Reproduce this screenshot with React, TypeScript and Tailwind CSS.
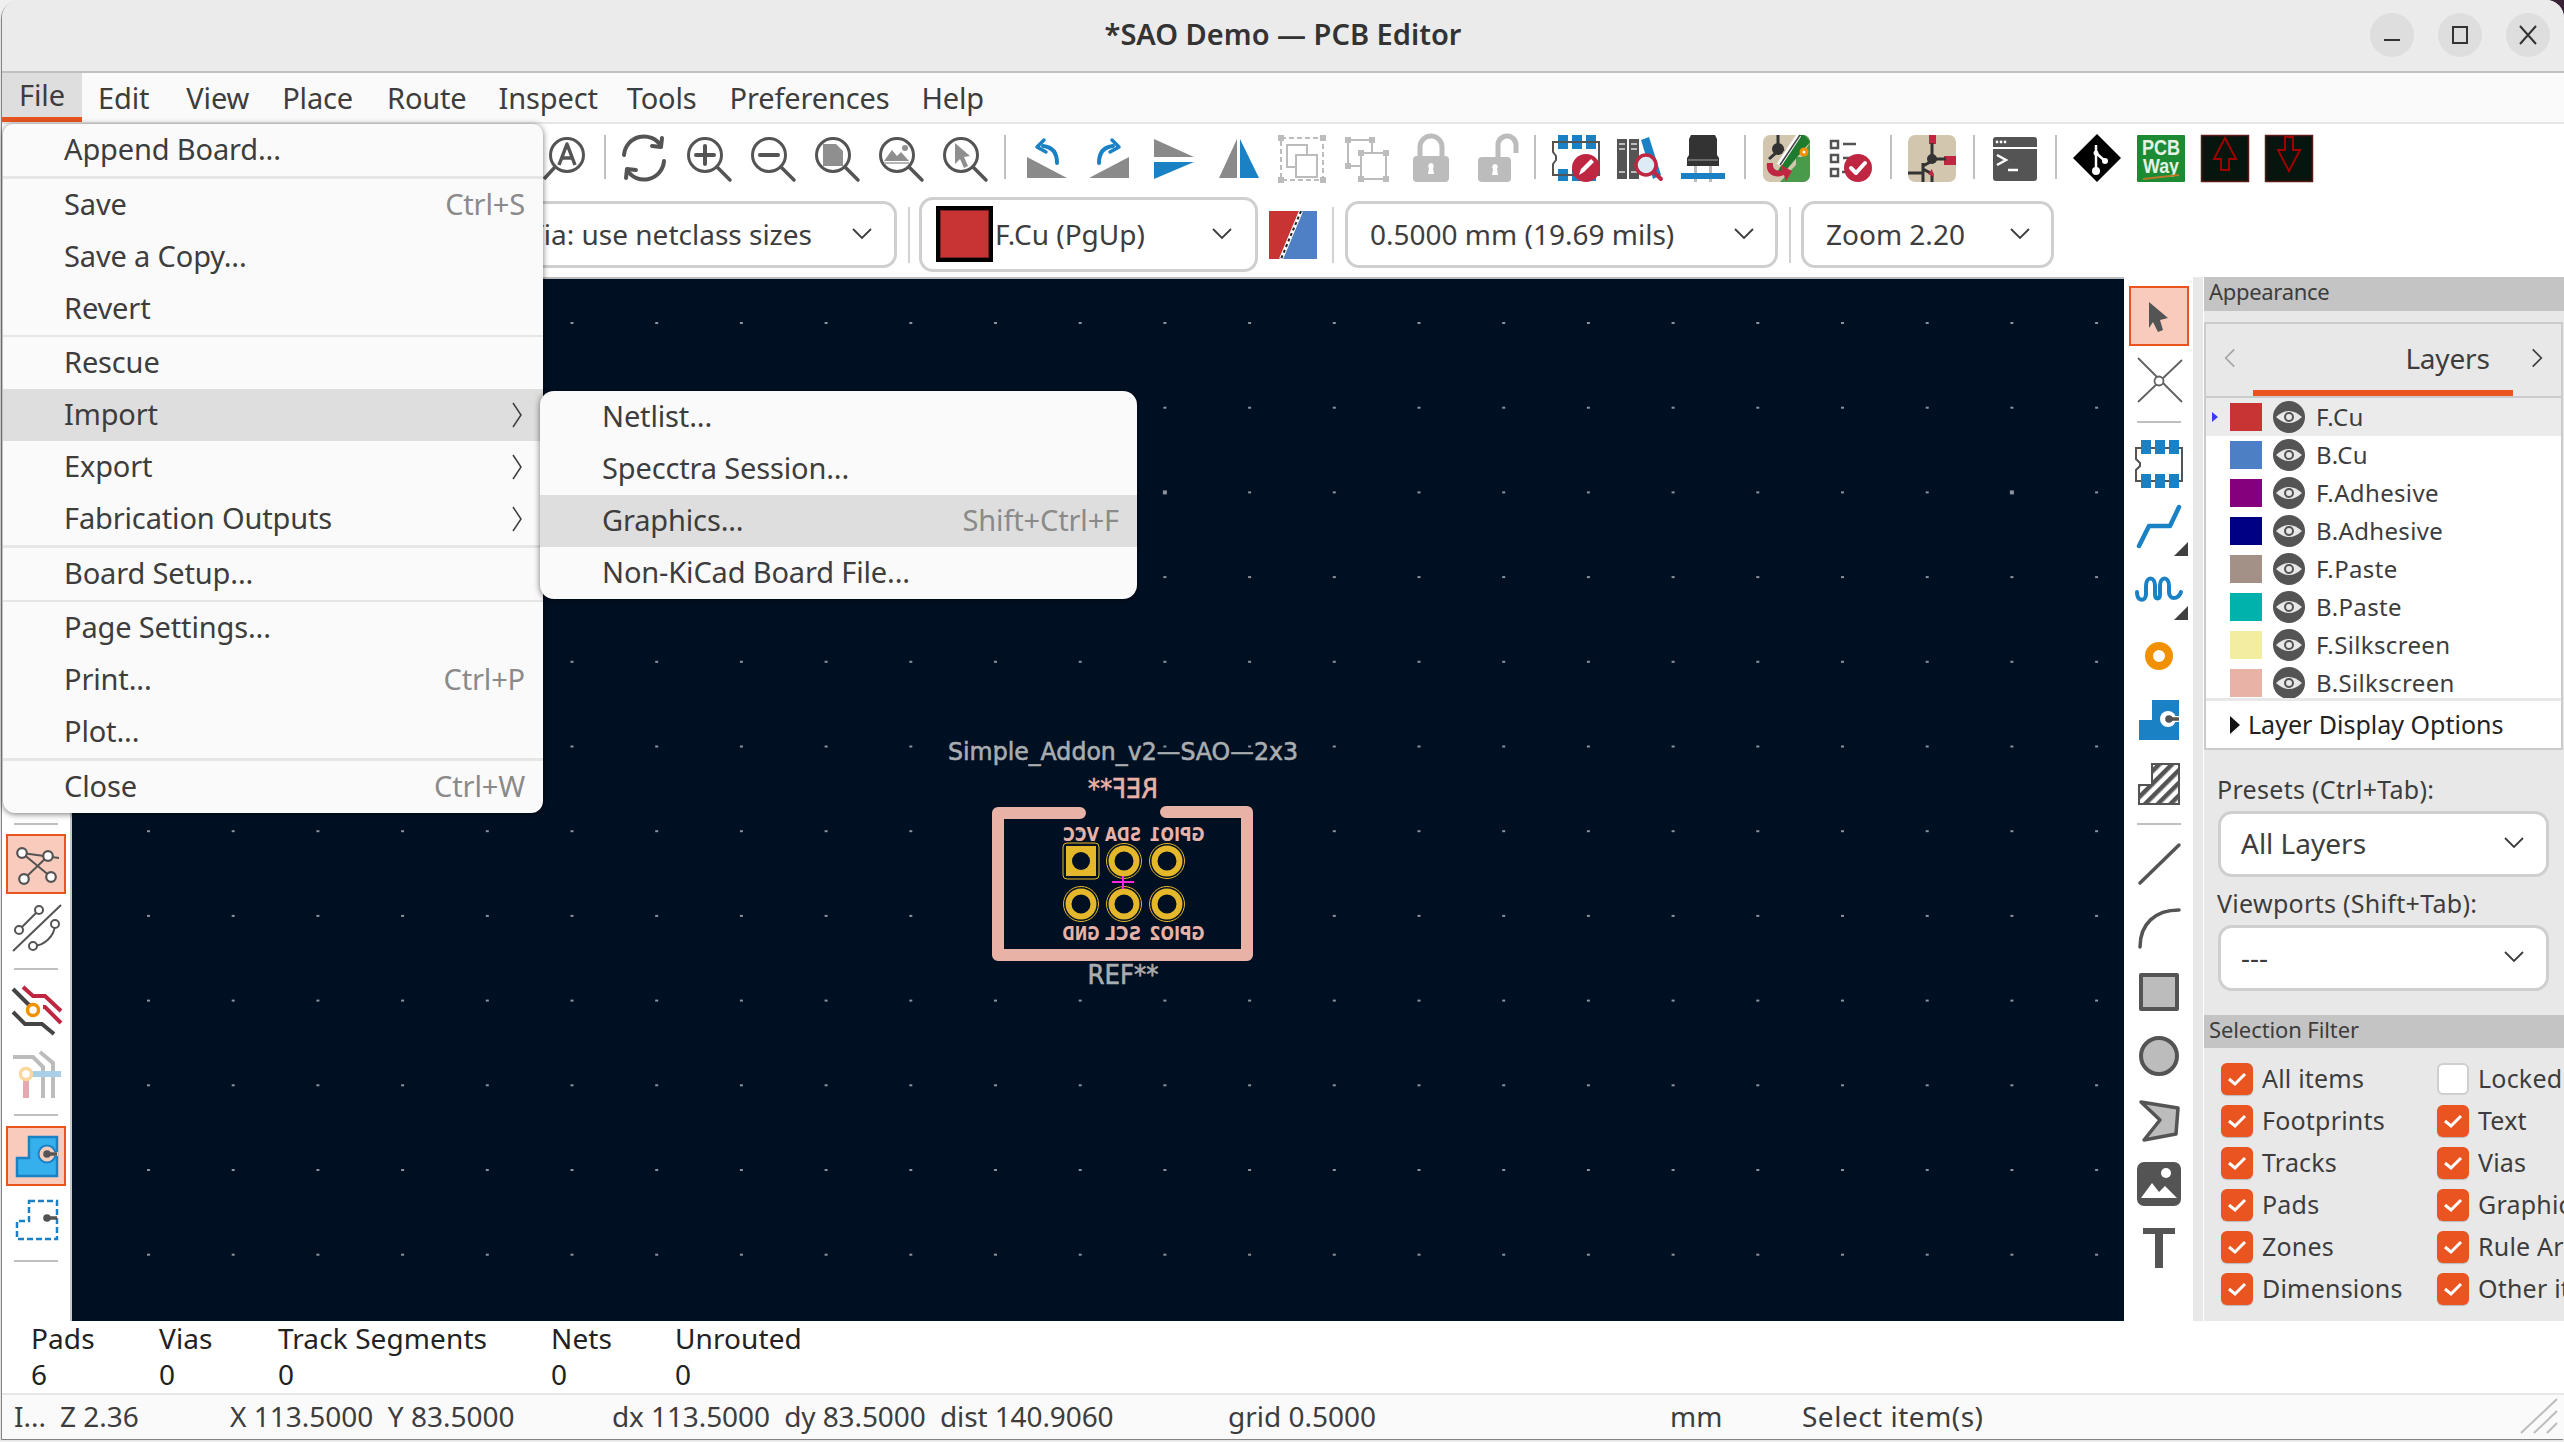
import type { ReactNode } from "react";

const GRAY = "#545454";
const BLUE = "#1a81c4";
const RED = "#bf2641";
const ORANGE = "#f29100";
const LIGHT = "#bcbcbc";

function Ico({ children }: { children: ReactNode }) {
  return (
    <svg viewBox="0 0 48 48" className="w-12 h-12 overflow-visible shrink-0">
      {children}
    </svg>
  );
}

function Cell({ children }: { children: ReactNode }) {
  return <div className="w-16 h-12 flex items-center justify-center shrink-0">{children}</div>;
}

function Sep({ w = "w-[18px]" }: { w?: string }) {
  return (
    <div className={`${w} h-[44px] flex justify-center shrink-0`}>
      <div className="w-[2px] h-full bg-[#c0c0c0]" />
    </div>
  );
}

function Lens({ children }: { children?: ReactNode }) {
  return (
    <>
      <circle cx="21" cy="22" r="16.5" fill="none" stroke={GRAY} strokeWidth="3" />
      <path d="M33 34 L46 47" stroke={GRAY} strokeWidth="3.5" strokeLinecap="round" />
      {children}
    </>
  );
}

function RotIcon({ flip }: { flip?: boolean }) {
  return (
    <Ico>
      <g transform={flip ? "translate(48 0) scale(-1 1)" : undefined}>
        <polygon points="5,24 5,45 45,45" fill="#8a8a8a" />
        <path d="M35 30 C35 20 31 14 21 13" fill="none" stroke={BLUE} strokeWidth="4" strokeLinecap="round" />
        <path d="M22 7 L15 14 L24 19" fill="none" stroke={BLUE} strokeWidth="3.5" strokeLinecap="round" strokeLinejoin="round" />
      </g>
    </Ico>
  );
}

function RedBadgeCheck({ cx, cy }: { cx: number; cy: number }) {
  return (
    <>
      <circle cx={cx} cy={cy} r="14" fill={RED} />
      <path d={`M${cx - 7} ${cy} L${cx - 2} ${cy + 5} L${cx + 7} ${cy - 5}`} fill="none" stroke="#fff" strokeWidth="4" strokeLinecap="round" strokeLinejoin="round" />
    </>
  );
}

function TopToolbar() {
  return (
    <div className="h-[76px] bg-white flex items-center pl-[532px] pb-[10px]">
      <Cell>
        <Ico>
          <circle cx="25" cy="22" r="16.5" fill="none" stroke={GRAY} strokeWidth="3" />
          <path d="M13 34 L2 46" stroke={GRAY} strokeWidth="3.5" />
          <path d="M17 32 L25 11 L33 32 M19.5 25 L30.5 25" fill="none" stroke={GRAY} strokeWidth="3.5" strokeLinejoin="round" />
        </Ico>
      </Cell>
      <Sep w="w-[14px]" />
      <Cell>
        <Ico>
          <g fill="none" stroke={GRAY} strokeWidth="4" strokeLinecap="round" strokeLinejoin="round">
            <path d="M4 22 A20 20 0 0 1 41 13" />
            <path d="M42 5 L41 14 L32 13" />
            <path d="M44 28 A20 20 0 0 1 7 37" />
            <path d="M6 45 L7 36 L16 37" />
          </g>
        </Ico>
      </Cell>
      <Cell>
        <Ico>
          <Lens>
            <path d="M12 22 H30 M21 13 V31" stroke={GRAY} strokeWidth="4" strokeLinecap="round" />
          </Lens>
        </Ico>
      </Cell>
      <Cell>
        <Ico>
          <Lens>
            <path d="M12 22 H30" stroke={GRAY} strokeWidth="4" strokeLinecap="round" />
          </Lens>
        </Ico>
      </Cell>
      <Cell>
        <Ico>
          <Lens>
            <path d="M11 11 H24 L31 18 V33 H11 Z" fill="#8f8f8f" />
          </Lens>
        </Ico>
      </Cell>
      <Cell>
        <Ico>
          <Lens>
            <path d="M8 28 L16 17 L21 23 L25 19 L33 28 Z" fill="#8f8f8f" />
            <circle cx="29" cy="15" r="3" fill="#8f8f8f" />
            <rect x="8" y="29" width="25" height="2" fill="#b5b5b5" />
          </Lens>
        </Ico>
      </Cell>
      <Cell>
        <Ico>
          <Lens>
            <path d="M15 10 L30 23 L24 24 L28 33 L24 35 L20 26 L15 31 Z" fill="#8f8f8f" />
          </Lens>
        </Ico>
      </Cell>
      <Sep />
      <Cell>
        <RotIcon />
      </Cell>
      <Cell>
        <RotIcon flip />
      </Cell>
      <Cell>
        <Ico>
          <polygon points="4,6 44,24 4,24" fill="#8a8a8a" />
          <polygon points="4,29 44,29 4,46" fill={BLUE} />
        </Ico>
      </Cell>
      <Cell>
        <Ico>
          <polygon points="5,45 23,6 23,45" fill="#8a8a8a" />
          <polygon points="26,6 45,45 26,45" fill={BLUE} />
        </Ico>
      </Cell>
      <Cell>
        <Ico>
          <rect x="3" y="5" width="42" height="42" fill="none" stroke={LIGHT} strokeWidth="2" strokeDasharray="5 3" />
          <g fill={LIGHT}>
            <rect x="0" y="2" width="6" height="6" />
            <rect x="42" y="2" width="6" height="6" />
            <rect x="0" y="44" width="6" height="6" />
            <rect x="42" y="44" width="6" height="6" />
          </g>
          <rect x="9" y="12" width="20" height="22" fill="none" stroke={LIGHT} strokeWidth="2" />
          <rect x="18" y="22" width="21" height="22" fill="#fff" stroke={LIGHT} strokeWidth="2" />
        </Ico>
      </Cell>
      <Cell>
        <Ico>
          <g fill="none" stroke={LIGHT} strokeWidth="2">
            <rect x="6" y="7" width="24" height="26" />
            <rect x="19" y="20" width="25" height="26" fill="#fff" />
          </g>
          <g fill={LIGHT}>
            <rect x="3" y="4" width="6" height="6" />
            <rect x="27" y="4" width="6" height="6" />
            <rect x="3" y="30" width="6" height="6" />
            <rect x="16" y="17" width="6" height="6" />
            <rect x="41" y="17" width="6" height="6" />
            <rect x="16" y="43" width="6" height="6" />
            <rect x="41" y="43" width="6" height="6" />
          </g>
        </Ico>
      </Cell>
      <Cell>
        <Ico>
          <path d="M14 24 V14 A11 11 0 0 1 36 14 V24" fill="none" stroke={LIGHT} strokeWidth="5" />
          <rect x="7" y="23" width="36" height="26" rx="4" fill={LIGHT} />
          <path d="M25 30 a3 3 0 0 1 2 5 l1 6 h-6 l1 -6 a3 3 0 0 1 2 -5 Z" fill="#fff" />
        </Ico>
      </Cell>
      <Cell>
        <Ico>
          <path d="M28 24 V12 A9 9 0 0 1 46 12 V20" fill="none" stroke={LIGHT} strokeWidth="5" />
          <rect x="8" y="24" width="33" height="25" rx="4" fill={LIGHT} />
          <path d="M25 31 a3 3 0 0 1 2 5 l1 6 h-6 l1 -6 a3 3 0 0 1 2 -5 Z" fill="#fff" />
        </Ico>
      </Cell>
      <Sep />
      <Cell>
        <Ico>
          <g fill={BLUE}>
            <rect x="6" y="2" width="10" height="14" />
            <rect x="20" y="2" width="10" height="14" />
            <rect x="34" y="2" width="10" height="14" />
            <rect x="6" y="36" width="10" height="12" />
            <rect x="20" y="36" width="10" height="12" />
            <rect x="34" y="36" width="10" height="12" />
          </g>
          <path d="M1 9 H47 V42 H1 V31 L4 27 V23 L1 19 Z" fill="none" stroke={GRAY} strokeWidth="2" />
          <circle cx="34" cy="35" r="14" fill={RED} />
          <path d="M27 42 L29 36 L39 26 L42 29 L32 39 Z" fill="#fff" />
        </Ico>
      </Cell>
      <Cell>
        <Ico>
          <rect x="1" y="6" width="10" height="40" fill={GRAY} />
          <rect x="13" y="6" width="10" height="40" fill={GRAY} />
          <g fill="#bdbdbd">
            <rect x="3" y="10" width="6" height="2" />
            <rect x="3" y="15" width="6" height="2" />
            <rect x="3" y="38" width="6" height="2" />
            <rect x="15" y="10" width="6" height="2" />
            <rect x="15" y="15" width="6" height="2" />
            <rect x="15" y="38" width="6" height="2" />
          </g>
          <polygon points="25,7 33,4 45,42 37,46" fill={BLUE} />
          <circle cx="30" cy="32" r="10" fill="#dcebf5" stroke={RED} strokeWidth="3.5" />
          <path d="M38 39 L45 46" stroke={RED} strokeWidth="4" strokeLinecap="round" />
        </Ico>
      </Cell>
      <Cell>
        <Ico>
          <g transform="translate(2 0)">
            <path d="M7 6 L9 2 H33 L35 6 V22 L37 25 V33 H5 V25 L7 22 Z" fill="#333" />
            <rect x="6" y="26" width="30" height="2" fill="#6a6a6a" />
            <rect x="12" y="33" width="3" height="16" fill={LIGHT} />
            <rect x="27" y="33" width="3" height="16" fill={LIGHT} />
            <rect x="-1" y="40" width="44" height="6" fill={BLUE} />
          </g>
        </Ico>
      </Cell>
      <Sep />
      <Cell>
        <Ico>
          <rect x="1" y="2" width="47" height="47" rx="7" fill="#d2c6ae" />
          <path d="M48 9 V42 A7 7 0 0 1 41 49 H18 L34 32 V24 L40 24 L48 9 Z M38 2 H41 A7 7 0 0 1 48 9 L30 27 Z" fill="#4a9a4c" />
          <path d="M36 2 H42 L48 9 L20 42 L16 38 Z" fill="#1e7a2c" />
          <path d="M37 2 L17 32" stroke="#fff" strokeWidth="5" />
          <path d="M38 2 L18 32" stroke="#444" strokeWidth="1.5" />
          <path d="M16 2 V12 M7 26 L16 18 L16 12 M16 18 L22 16" stroke="#333" strokeWidth="3" fill="none" />
          <circle cx="16" cy="16" r="6" fill="#333" />
          <circle cx="42" cy="19" r="4.5" fill={ORANGE} />
          <circle cx="42" cy="19" r="1.5" fill="#fff" />
          <path d="M5 30 C3 42 14 46 22 42 L24 48 L30 38 L19 32 L20 37 C15 39 10 36 11 30 Z" fill={RED} />
        </Ico>
      </Cell>
      <Cell>
        <Ico>
          <g transform="translate(3 0)">
            <g fill="none" stroke={GRAY} strokeWidth="2.5">
              <rect x="2" y="8" width="7" height="7" />
              <rect x="2" y="22" width="7" height="7" />
              <rect x="2" y="36" width="7" height="7" />
            </g>
            <path d="M14 11 H27 M14 25 H22 M13 39 H18" stroke={GRAY} strokeWidth="2.5" />
            <RedBadgeCheck cx={29} cy={35} />
          </g>
        </Ico>
      </Cell>
      <Sep />
      <Cell>
        <Ico>
          <rect x="0" y="2" width="48" height="47" rx="7" fill="#d2c6ae" />
          <rect x="21" y="2" width="7" height="9" fill={RED} />
          <rect x="36" y="23" width="12" height="9" fill={RED} />
          <path d="M24 10 V26 M24 26 H38 M0 40 H15 M15 30 V49 M15 33 L24 28 M15 36 L24 41 V49" stroke="#333" strokeWidth="3" fill="none" />
          <circle cx="24" cy="26" r="5" fill="#333" />
          <path d="M20 41 L24 36 L26 44 Z" fill={RED} />
        </Ico>
      </Cell>
      <Sep w="w-[19px]" />
      <Cell>
        <Ico>
          <rect x="2" y="4" width="44" height="44" rx="3" fill={GRAY} />
          <rect x="2" y="14" width="44" height="2" fill="#fff" />
          <circle cx="6" cy="9" r="1.4" fill="#fff" />
          <circle cx="10" cy="9" r="1.4" fill="#fff" />
          <circle cx="14" cy="9" r="1.4" fill="#fff" />
          <path d="M6 22 L15 27 L6 32" fill="none" stroke="#fff" strokeWidth="2.5" />
          <path d="M17 37 H27" stroke="#fff" strokeWidth="2.5" />
        </Ico>
      </Cell>
      <Sep />
      <Cell>
        <Ico>
          <polygon points="24,1 48,25 24,49 0,25" fill="#000" />
          <path d="M23 12 L23 38 M23 20 L32 28" stroke="#fff" strokeWidth="2.5" />
          <circle cx="23" cy="38" r="4" fill="#fff" />
          <circle cx="23" cy="20" r="2.5" fill="#fff" />
          <circle cx="32" cy="28" r="3" fill="#fff" />
        </Ico>
      </Cell>
      <Cell>
        <Ico>
          <rect x="0" y="2" width="48" height="47" rx="1" fill="#1d8b33" />
          <text x="24" y="22" textAnchor="middle" textLength="38" lengthAdjust="spacingAndGlyphs" fontFamily="'Liberation Sans', sans-serif" fontSize="22" fontWeight="700" fill="#e4f2e6">PCB</text>
          <text x="24" y="40" textAnchor="middle" textLength="36" lengthAdjust="spacingAndGlyphs" fontFamily="'Liberation Sans', sans-serif" fontSize="20" fontWeight="700" fill="#e4f2e6">Way</text>
          <path d="M6 46 L42 42" stroke="#b8792a" strokeWidth="2" />
        </Ico>
      </Cell>
      <Cell>
        <Ico>
          <rect x="0.5" y="2.5" width="47" height="46" fill="#06150d" stroke="#5a1a1a" strokeWidth="1.5" />
          <path d="M24 5 L35 26 H28 V37 H20 V26 H13 Z" fill="none" stroke="#a00000" strokeWidth="2" />
        </Ico>
      </Cell>
      <Cell>
        <Ico>
          <rect x="0.5" y="2.5" width="47" height="46" fill="#06150d" stroke="#5a1a1a" strokeWidth="1.5" />
          <path d="M24 38 L35 17 H28 V4 H20 V17 H13 Z" fill="none" stroke="#a00000" strokeWidth="2" />
        </Ico>
      </Cell>
    </div>
  );
}

function Chevron({ className }: { className?: string }) {
  return (
    <svg viewBox="0 0 20 12" className={`w-[20px] h-[12px] shrink-0 ${className ?? ""}`}>
      <path d="M1 1 L10 10 L19 1" fill="none" stroke="#3d3d3d" strokeWidth="1.8" />
    </svg>
  );
}

function AuxToolbar() {
  const combo = "bg-white border-[3px] border-[#cfcfcf] rounded-[14px] flex items-center shrink-0 pb-[2px]";
  const vsep = "w-[2px] h-[56px] bg-[#d2d2d2] mt-[6px] shrink-0";
  return (
    <div className="h-[77px] bg-white flex items-start pt-[1px] text-[#3d3d3d] text-[28px] tracking-[0px]">
      <div className={`${combo} ml-[298px] w-[597px] h-[67px] pl-[224px] pr-[22px] justify-between`}>
        <span>Via: use netclass sizes</span>
        <Chevron />
      </div>
      <div className={`${vsep} ml-[11px]`} />
      <div className={`${combo} ml-[9px] w-[339px] h-[75px] -mt-[4px] pl-[14px] pr-[23px]`}>
        <div className="w-[57px] h-[56px] bg-black p-[4px] shrink-0">
          <div className="w-full h-full bg-[#c83434] border border-[#7a2020]" />
        </div>
        <span className="ml-[2px]">F.Cu (PgUp)</span>
        <Chevron className="ml-auto" />
      </div>
      <svg viewBox="0 0 48 48" className="w-12 h-12 ml-[11px] mt-[10px] shrink-0">
        <rect width="48" height="48" fill="#4f7fc4" />
        <polygon points="0,0 32,0 12,48 0,48" fill="#c83434" />
        <path d="M32 0 L12 48" stroke="#fff" strokeWidth="4" />
        <path d="M32 0 L12 48" stroke="#222" strokeWidth="2" strokeDasharray="3 3" />
      </svg>
      <div className={`${vsep} ml-[15px]`} />
      <div className={`${combo} ml-[11px] w-[433px] h-[67px] pl-[22px] pr-[21px] justify-between`}>
        <span>0.5000 mm (19.69 mils)</span>
        <Chevron />
      </div>
      <div className={`${vsep} ml-[11px]`} />
      <div className={`${combo} ml-[10px] w-[253px] h-[67px] pl-[22px] pr-[21px] justify-between`}>
        <span>Zoom 2.20</span>
        <Chevron />
      </div>
    </div>
  );
}

function HBar() {
  return <div className="w-[44px] h-[2px] bg-[#c0c0c0]" />;
}

function ToolCell({ active, children }: { active?: boolean; children: ReactNode }) {
  return (
    <div className="h-16 w-full flex items-center justify-center shrink-0">
      {active ? (
        <div className="w-[60px] h-[60px] bg-[#f9cbbd] border-[2px] border-[#e95420] flex items-center justify-center">{children}</div>
      ) : (
        children
      )}
    </div>
  );
}

function LeftToolbar() {
  return (
    <div className="w-[70px] h-full bg-white border-r-[2px] border-[#c9c9c9] flex flex-col items-center pt-[539px] shrink-0">
      <div className="h-4 flex items-center">
        <HBar />
      </div>
      <ToolCell active>
        <Ico>
          <g stroke={GRAY} strokeWidth="2" fill="none">
            <path d="M10 13 L39 37 M12 39 L36 16 M10 13 L47 18" />
          </g>
          <g fill="#fff" stroke={GRAY} strokeWidth="2.2">
            <circle cx="10" cy="13" r="4.8" />
            <circle cx="36" cy="16" r="4.8" />
            <circle cx="12" cy="39" r="4.8" />
            <circle cx="39" cy="37" r="4.8" />
          </g>
        </Ico>
      </ToolCell>
      <ToolCell>
        <Ico>
          <g stroke={GRAY} strokeWidth="2" fill="none">
            <path d="M1 47 L49 1" />
            <path d="M7 26 L27 6" />
            <path d="M21 42 C32 42 43 32 43 20" />
          </g>
          <g fill="#fff" stroke={GRAY} strokeWidth="2">
            <circle cx="7" cy="26" r="4" />
            <circle cx="27" cy="6" r="4" />
            <circle cx="21" cy="42" r="4" />
            <circle cx="43" cy="20" r="4" />
          </g>
        </Ico>
      </ToolCell>
      <div className="h-[18px] flex items-center">
        <HBar />
      </div>
      <ToolCell>
        <Ico>
          <g fill="none" strokeWidth="4">
            <path d="M11 1 L21 10 H33 L49 25" stroke={RED} />
            <path d="M31 21 H33 L49 37" stroke={RED} />
            <path d="M1 3 L22 24" stroke="#444" />
            <path d="M1 26 L13 38 H30 L42 48" stroke="#444" />
          </g>
          <circle cx="21" cy="24" r="5.5" fill="#fff" stroke={ORANGE} strokeWidth="3.5" />
        </Ico>
      </ToolCell>
      <ToolCell>
        <Ico>
          <g fill="none" stroke={LIGHT} strokeWidth="4">
            <path d="M1 7 H21 L31 17 V48" />
            <path d="M28 2 L41 13 V48" />
          </g>
          <rect x="14" y="21" width="35" height="6" fill="#a9d0e8" />
          <rect x="11" y="30" width="6" height="18" fill="#e6a8b0" />
          <circle cx="14" cy="24" r="5.5" fill="#fff" stroke="#fbd79e" strokeWidth="3.5" />
        </Ico>
      </ToolCell>
      <div className="h-[18px] flex items-center">
        <HBar />
      </div>
      <ToolCell active>
        <Ico>
          <path d="M17 5 H45 V44 H5 V26 H17 Z" fill="#36b0ec" stroke={BLUE} strokeWidth="2.5" />
          <circle cx="35" cy="22" r="8.5" fill="#f9cbbd" stroke={BLUE} strokeWidth="2" />
          <rect x="35" y="20" width="11" height="4" fill="#f9cbbd" />
          <path d="M35 22 H45" stroke={GRAY} strokeWidth="3.5" />
          <circle cx="35" cy="22" r="3.8" fill={GRAY} />
        </Ico>
      </ToolCell>
      <ToolCell>
        <Ico>
          <path d="M17 5 H45 V43 H5 V25 H17 Z" fill="none" stroke={BLUE} strokeWidth="2.5" strokeDasharray="6 3" />
          <path d="M35 22 H45" stroke={GRAY} strokeWidth="3.5" />
          <circle cx="35" cy="22" r="3.8" fill={GRAY} />
        </Ico>
      </ToolCell>
      <div className="h-[18px] flex items-center">
        <HBar />
      </div>
    </div>
  );
}

function RightToolbar() {
  const corner = (y: number) => <polygon points={`39,${y} 53,${y} 53,${y - 14}`} fill="#404040" />;
  return (
    <div className="w-[69px] h-full bg-white flex flex-col items-center pt-[7px] shrink-0">
      <ToolCell active>
        <Ico>
          <path d="M14 10 L33 26 L25 28 L28 38 L23 40 L18 30 L14 36 Z" fill={GRAY} />
        </Ico>
      </ToolCell>
      <ToolCell>
        <Ico>
          <path d="M3 2 L47 46 M3 46 L47 4" stroke="#616161" strokeWidth="1.8" />
          <circle cx="24" cy="25" r="4.5" fill="#fff" stroke="#616161" strokeWidth="1.8" />
        </Ico>
      </ToolCell>
      <div className="h-5 flex items-center">
        <HBar />
      </div>
      <ToolCell>
        <Ico>
          <path d="M1 8 H47 V41 H1 V30 L5 26 V23 L1 19 Z" fill="none" stroke={GRAY} strokeWidth="2" />
          <g fill={BLUE}>
            <rect x="6" y="0" width="10" height="14" />
            <rect x="20" y="0" width="10" height="14" />
            <rect x="34" y="0" width="10" height="14" />
            <rect x="6" y="34" width="10" height="14" />
            <rect x="20" y="34" width="10" height="14" />
            <rect x="34" y="34" width="10" height="14" />
          </g>
        </Ico>
      </ToolCell>
      <ToolCell>
        <Ico>
          <path d="M4 42 L14 22 H35 L44 3" fill="none" stroke={BLUE} strokeWidth="4.5" strokeLinecap="round" strokeLinejoin="round" />
          {corner(52)}
        </Ico>
      </ToolCell>
      <ToolCell>
        <Ico>
          <path d="M2 24 c0 10 9 10 9 2 v-8 c0 -10 9 -10 9 0 v8 c0 6 5 6 5 0 v-8 c0 -10 9 -10 9 0 v6 c0 8 9 8 12 0" fill="none" stroke={BLUE} strokeWidth="4" strokeLinecap="round" />
          {corner(52)}
        </Ico>
      </ToolCell>
      <ToolCell>
        <Ico>
          <circle cx="24" cy="24" r="10" fill="#fff" stroke={ORANGE} strokeWidth="8" />
        </Ico>
      </ToolCell>
      <ToolCell>
        <Ico>
          <path d="M17 4 H44 V44 H4 V24 H17 Z" fill={BLUE} />
          <circle cx="33" cy="23" r="8" fill="#fff" />
          <rect x="33" y="20" width="11" height="6" fill="#fff" />
          <path d="M34 23 H44" stroke={GRAY} strokeWidth="3.5" />
          <circle cx="34" cy="23" r="3.8" fill={GRAY} />
        </Ico>
      </ToolCell>
      <ToolCell>
        <Ico>
          <defs>
            <pattern id="hatch" width="9" height="9" patternUnits="userSpaceOnUse" patternTransform="rotate(45)">
              <rect width="9" height="9" fill="#fff" />
              <rect width="4.5" height="9" fill={GRAY} />
            </pattern>
          </defs>
          <path d="M17 4 H44 V44 H4 V25 H17 Z" fill="url(#hatch)" stroke={GRAY} strokeWidth="2" />
        </Ico>
      </ToolCell>
      <div className="h-4 flex items-center">
        <HBar />
      </div>
      <ToolCell>
        <Ico>
          <path d="M5 43 L44 5" stroke={GRAY} strokeWidth="3.5" strokeLinecap="round" />
        </Ico>
      </ToolCell>
      <ToolCell>
        <Ico>
          <path d="M5 43 C5 20 20 6 44 6" fill="none" stroke={GRAY} strokeWidth="3.5" strokeLinecap="round" />
        </Ico>
      </ToolCell>
      <ToolCell>
        <Ico>
          <rect x="6" y="7" width="36" height="34" fill={LIGHT} stroke={GRAY} strokeWidth="4" strokeLinejoin="round" />
        </Ico>
      </ToolCell>
      <ToolCell>
        <Ico>
          <circle cx="24" cy="24" r="18" fill={LIGHT} stroke={GRAY} strokeWidth="4" />
        </Ico>
      </ToolCell>
      <ToolCell>
        <Ico>
          <polygon points="6,6 43,12 41,38 9,44 25,24" fill={LIGHT} stroke={GRAY} strokeWidth="3.5" strokeLinejoin="round" />
        </Ico>
      </ToolCell>
      <ToolCell>
        <Ico>
          <rect x="2" y="2" width="44" height="44" rx="7" fill={GRAY} />
          <path d="M6 38 L17 23 L24 32 L30 26 L42 38 Z" fill="#fff" />
          <circle cx="31" cy="13" r="5" fill="#fff" />
        </Ico>
      </ToolCell>
      <ToolCell>
        <Ico>
          <path d="M8 4 H40 V10 H28 V44 H20 V10 H8 Z" fill={GRAY} />
        </Ico>
      </ToolCell>
    </div>
  );
}

const LAYERS: [string, string][] = [
  ["F.Cu", "#c83434"],
  ["B.Cu", "#4d7fc4"],
  ["F.Adhesive", "#84007c"],
  ["B.Adhesive", "#000084"],
  ["F.Paste", "#a39187"],
  ["B.Paste", "#00b2ac"],
  ["F.Silkscreen", "#f2eda1"],
  ["B.Silkscreen", "#e8b2a7"],
];

function EyeIcon() {
  return (
    <svg viewBox="0 0 32 32" className="w-8 h-8 shrink-0">
      <circle cx="16" cy="16" r="16" fill={GRAY} />
      <path d="M3 16 Q16 4 29 16 Q16 28 3 16 Z" fill="#e8e8e8" />
      <circle cx="16" cy="16" r="4" fill="none" stroke={GRAY} strokeWidth="2" />
    </svg>
  );
}

function SelectBox({ label }: { label: string }) {
  return (
    <div className="w-[331px] h-[66px] bg-white border-[3px] border-[#cfcfcf] rounded-[14px] ml-[14px] flex items-center justify-between pl-[20px] pr-[22px] pb-[2px] text-[#3d3d3d] text-[28px]">
      <span>{label}</span>
      <Chevron />
    </div>
  );
}

const FILTERS: [string, boolean][] = [
  ["All items", true],
  ["Locked items", false],
  ["Footprints", true],
  ["Text", true],
  ["Tracks", true],
  ["Vias", true],
  ["Pads", true],
  ["Graphics", true],
  ["Zones", true],
  ["Rule Areas", true],
  ["Dimensions", true],
  ["Other items", true],
];

function AppearancePanel() {
  return (
    <div className="w-[361px] shrink-0 h-full bg-[#e8e8e8] overflow-hidden border-l border-white">
      <div className="h-[34px] bg-[#c4c4c4] pl-[5px] text-[22px] leading-[28px] text-[#3d3d3d] tracking-[-0.3px]">Appearance</div>
      <div className="mt-[11px] mr-[1px] border-[2px] border-[#cbcbcb] h-[428px]">
        <div className="h-[72px] flex flex-col">
          <div className="h-[66px] flex items-center justify-between pl-[18px] pr-[18px] pt-[2px]">
            <svg viewBox="0 0 14 24" className="w-[12px] h-[22px]">
              <path d="M12 2 L2 12 L12 22" fill="none" stroke="#a5a5a5" strokeWidth="2" />
            </svg>
            <span className="text-[28px] text-[#3d3d3d] ml-[128px] tracking-[-0.2px]">Layers</span>
            <svg viewBox="0 0 14 24" className="w-[12px] h-[22px]">
              <path d="M2 2 L12 12 L2 22" fill="none" stroke="#3d3d3d" strokeWidth="2" />
            </svg>
          </div>
          <div className="h-[6px] w-[260px] ml-[47px] bg-[#e95420]" />
        </div>
        <div className="h-[302px] overflow-hidden bg-white border-t-[2px] border-[#cbcbcb]">
          {LAYERS.map(([name, color], i) => (
            <div key={name} className={`h-[38px] flex items-center pl-[24px] ${i === 0 ? "bg-[#ebebeb]" : ""}`}>
              <div className="w-[8px] h-[12px] -ml-[19px] mr-[11px] shrink-0">
                {i === 0 && (
                  <svg viewBox="0 0 8 12" className="w-[8px] h-[12px]">
                    <path d="M1 1 V11 L7 6 Z" fill="#3a3aff" />
                  </svg>
                )}
              </div>
              <div className="w-[32px] h-[28px] shrink-0" style={{ backgroundColor: color }} />
              <div className="ml-[11px]">
                <EyeIcon />
              </div>
              <span className="ml-[11px] text-[24px] text-[#3d3d3d] tracking-[0.35px]">{name}</span>
            </div>
          ))}
        </div>
        <div className="h-[50px] bg-white border-t-[3px] border-[#e8e8e8] flex items-center pl-[24px] text-[25px] text-[#222] tracking-[0px]">
          <svg viewBox="0 0 10 18" className="w-[10px] h-[18px] mr-[8px]">
            <path d="M0 0 L10 9 L0 18 Z" fill="#111" />
          </svg>
          Layer Display Options
        </div>
      </div>
      <div className="mt-[24px] ml-[13px] h-[30px] leading-[30px] text-[25px] text-[#3d3d3d] tracking-[0.3px]">Presets (Ctrl+Tab):</div>
      <div className="mt-[7px]">
        <SelectBox label="All Layers" />
      </div>
      <div className="mt-[11px] ml-[13px] h-[30px] leading-[30px] text-[25px] text-[#3d3d3d] tracking-[0.3px]">Viewports (Shift+Tab):</div>
      <div className="mt-[7px]">
        <SelectBox label="---" />
      </div>
      <div className="mt-[24px] h-[33px] bg-[#c4c4c4] pl-[5px] text-[22px] leading-[28px] text-[#3d3d3d] tracking-[-0.1px]">Selection Filter</div>
      <div className="mt-[10px] ml-[17px] grid grid-cols-[216px_216px]">
        {FILTERS.map(([name, on]) => (
          <div key={name} className="h-[42px] flex items-center whitespace-nowrap">
            {on ? (
              <div className="w-8 h-8 rounded-[6px] bg-[#e95420] flex items-center justify-center shadow-[0_1px_1px_rgba(0,0,0,0.2)] shrink-0">
                <svg viewBox="0 0 20 16" className="w-5 h-4">
                  <path d="M2 8 L8 13 L18 3" fill="none" stroke="#fff" strokeWidth="3" />
                </svg>
              </div>
            ) : (
              <div className="w-8 h-8 rounded-[6px] bg-white border-[2px] border-[#cfcfcf] shrink-0" />
            )}
            <span className="ml-[9px] text-[25px] text-[#3d3d3d] tracking-[0.2px]">{name}</span>
          </div>
        ))}
      </div>
    </div>
  );
}

function Canvas() {
  const dots: ReactNode[] = [];
  for (let i = -5; i < 19; i++) {
    for (let j = 0; j < 12; j++) {
      const x = 572 + 84.7 * i;
      const y = 323 + 84.7 * j;
      const major = j === 2 && (i === 7 || i === 17);
      dots.push(
        <rect key={`${i}-${j}`} x={x - (major ? 2 : 1.5)} y={y - (major ? 2 : 1)} width={major ? 4 : 3} height={major ? 4 : 2} fill="#8b929b" />
      );
    }
  }
  const silk = "#e8b2a7";
  const grey = "#a9adb0";
  const labels: [string, number, number, number][] = [
    ["VCC", 1081, 841, 36],
    ["SDA", 1123, 841, 36],
    ["GPIO1", 1177, 841, 55],
    ["GND", 1081, 940, 37],
    ["SCL", 1123, 940, 36],
    ["GPIO2", 1177, 940, 55],
  ];
  const pads: [number, number][] = [
    [1124, 861],
    [1167, 861],
    [1081, 904],
    [1124, 904],
    [1167, 904],
  ];
  return (
    <div className="w-[2052px] shrink-0 h-full border-t-[2px] border-[#bdbdbd] bg-[#001023]">
      <svg viewBox="72 279 2052 1042" className="block w-full h-full">
        {dots}
        <text x="948" y="760" fontFamily="'DejaVu Sans', sans-serif" fontSize="25" fill={grey} stroke={grey} strokeWidth="0.6" textLength="350" lengthAdjust="spacingAndGlyphs">Simple_Addon_v2—SAO—2x3</text>
        <text transform="translate(1123 798) scale(-1 1)" textAnchor="middle" fontFamily="'DejaVu Sans', sans-serif" fontSize="26" fill={silk} stroke={silk} strokeWidth="0.6" textLength="70" lengthAdjust="spacingAndGlyphs">REF**</text>
        <path d="M1080 813 H998 V955 H1247 V812 H1166" fill="none" stroke={silk} strokeWidth="12" strokeLinecap="round" strokeLinejoin="round" />
        {labels.map(([t, cx, y, w]) => (
          <text key={t} transform={`translate(${cx} ${y}) scale(-1 1)`} textAnchor="middle" fontFamily="'DejaVu Sans', sans-serif" fontWeight="700" fontSize="19" fill={silk} textLength={w} lengthAdjust="spacingAndGlyphs">{t}</text>
        ))}
        <rect x="1063" y="843" width="36" height="36" rx="4" fill="none" stroke="#e5b72a" strokeWidth="1" />
        <rect x="1066" y="846" width="30" height="30" fill="#e5b72a" />
        <circle cx="1081" cy="861" r="9" fill="#001023" />
        {pads.map(([x, y]) => (
          <g key={`${x}-${y}`}>
            <circle cx={x} cy={y} r="17.5" fill="none" stroke="#e5b72a" strokeWidth="1" />
            <circle cx={x} cy={y} r="12.5" fill="none" stroke="#e5b72a" strokeWidth="6" />
          </g>
        ))}
        <path d="M1112 882 H1134 M1123 876 V889" stroke="#ff26e2" strokeWidth="2" />
        <text x="1123" y="984" textAnchor="middle" fontFamily="'DejaVu Sans', sans-serif" fontSize="26" fill={grey} stroke={grey} strokeWidth="0.6" textLength="71" lengthAdjust="spacingAndGlyphs">REF**</text>
      </svg>
    </div>
  );
}

const STATS: [string, string, string][] = [
  ["Pads", "6", "w-[128px]"],
  ["Vias", "0", "w-[119px]"],
  ["Track Segments", "0", "w-[273px]"],
  ["Nets", "0", "w-[124px]"],
  ["Unrouted", "0", "w-[200px]"],
];

function MessagePanel() {
  return (
    <div className="h-[72px] bg-white flex pl-[29px] -mt-[0px] text-[#222] text-[28px] leading-[34px] tracking-[0.1px] shrink-0">
      {STATS.map(([label, value, w]) => (
        <div key={label} className={w}>
          <div className="h-[36px]">{label}</div>
          <div className="h-[36px]">{value}</div>
        </div>
      ))}
    </div>
  );
}

function StatusBar() {
  return (
    <div className="h-[46px] bg-[#fafafa] border-t-[2px] border-[#e6e6e6] flex items-center pl-[12px] pb-[3px] text-[#3d3d3d] text-[28px] whitespace-nowrap shrink-0">
      <div className="w-[46px]">I...</div>
      <div className="w-[170px]">Z 2.36</div>
      <div className="w-[382px]">X 113.5000&nbsp; Y 83.5000</div>
      <div className="w-[616px] tracking-[-0.1px]">dx 113.5000&nbsp; dy 83.5000&nbsp; dist 140.9060</div>
      <div className="w-[442px]">grid 0.5000</div>
      <div className="w-[132px]">mm</div>
      <div className="tracking-[0.5px]">Select item(s)</div>
      <svg viewBox="0 0 38 36" className="w-[38px] h-[36px] ml-auto mr-[6px]">
        <path d="M1 35 L37 1 M14 35 L37 13 M27 35 L37 25" stroke="#bdbdbd" strokeWidth="2" />
      </svg>
    </div>
  );
}

type MenuEntry = { label?: string; accel?: string; sub?: boolean; hot?: boolean };

const FILE_MENU: MenuEntry[] = [
  { label: "Append Board..." },
  {},
  { label: "Save", accel: "Ctrl+S" },
  { label: "Save a Copy..." },
  { label: "Revert" },
  {},
  { label: "Rescue" },
  { label: "Import", sub: true, hot: true },
  { label: "Export", sub: true },
  { label: "Fabrication Outputs", sub: true },
  {},
  { label: "Board Setup..." },
  {},
  { label: "Page Settings..." },
  { label: "Print...", accel: "Ctrl+P" },
  { label: "Plot..." },
  {},
  { label: "Close", accel: "Ctrl+W" },
];

const IMPORT_MENU: MenuEntry[] = [
  { label: "Netlist..." },
  { label: "Specctra Session..." },
  { label: "Graphics...", accel: "Shift+Ctrl+F", hot: true },
  { label: "Non-KiCad Board File..." },
];

function MenuRows({ items, pad }: { items: MenuEntry[]; pad: string }) {
  return (
    <>
      {items.map((m, i) =>
        m.label ? (
          <div key={i} className={`h-[52px] flex items-center ${pad} pr-[18px] ${m.hot ? "bg-[#dedede]" : ""}`}>
            <span className="text-[#3d3d3d] -mt-[2px]">{m.label}</span>
            {m.accel && <span className="ml-auto -mt-[2px] text-[#8a8a8a]">{m.accel}</span>}
            {m.sub && (
              <svg viewBox="0 0 10 26" className="ml-auto mr-[3px] w-[10px] h-[26px]">
                <path d="M1 1 L9 13 L1 25" fill="none" stroke="#3d3d3d" strokeWidth="1.5" />
              </svg>
            )}
          </div>
        ) : (
          <div key={i} className="h-[2.5px] bg-[#e6e6e6]" />
        )
      )}
    </>
  );
}

const MENUBAR: [string, string][] = [
  ["File", "w-[80px] bg-[#dedede] border-b-[5px] border-[#e95420]"],
  ["Edit", "ml-[16px]"],
  ["View", "ml-[37px]"],
  ["Place", "ml-[33px]"],
  ["Route", "ml-[34px]"],
  ["Inspect", "ml-[32px]"],
  ["Tools", "ml-[29px]"],
  ["Preferences", "ml-[33px]"],
  ["Help", "ml-[32px]"],
];

export default function App() {
  return (
    <div className="relative w-[2564px] h-[1442px] overflow-hidden bg-[#efefef] font-['Noto_Sans',sans-serif]">
      <div className="absolute top-0 right-0 w-6 h-6 bg-[#3a2236]" />
      <div className="relative w-[2562px] h-[1439px] ml-[2px] flex flex-col rounded-t-[18px] overflow-hidden bg-[#e8e8e8] shadow-[-1px_1px_1px_#777]">
        {/* title */}
        <div className="h-[73px] bg-[#ebebeb] border-b-[2px] border-[#c0c0c0] relative flex items-center justify-center pb-[3px] shrink-0">
          <span className="text-[29px] font-semibold text-[#333]">*SAO Demo — PCB Editor</span>
          <div className="absolute right-[14px] top-[13px] flex gap-[24px]">
            {[0, 1, 2].map((b) => (
              <div key={b} className="w-[44px] h-[44px] rounded-full bg-[#dedede] flex items-center justify-center">
                <svg viewBox="0 0 20 20" className="w-5 h-5">
                  {b === 0 && <path d="M2 15 H18" stroke="#333" strokeWidth="2" />}
                  {b === 1 && <rect x="3" y="2" width="14" height="16" fill="none" stroke="#333" strokeWidth="2" />}
                  {b === 2 && <path d="M2 1 L18 19 M18 1 L2 19" stroke="#333" strokeWidth="2" />}
                </svg>
              </div>
            ))}
          </div>
        </div>
        {/* menu bar */}
        <div className="h-[51px] bg-[#fafafa] border-b-[2px] border-[#e6e6e6] flex items-stretch text-[29px] text-[#3d3d3d] tracking-[-0.15px] shrink-0">
          {MENUBAR.map(([t, cls]) => (
            <div key={t} className={`flex items-center justify-center ${cls}`}>
              {t}
            </div>
          ))}
        </div>
        <TopToolbar />
        <AuxToolbar />
        <div className="flex h-[1044px] shrink-0">
          <LeftToolbar />
          <Canvas />
          <RightToolbar />
          <div className="w-[10px] h-full bg-[#e8e8e8] shrink-0" />
          <AppearancePanel />
        </div>
        <MessagePanel />
        <StatusBar />
      </div>
      {/* desktop peeking out below the window */}
      <div className="h-[3px] overflow-hidden flex pl-[60px] text-[26px] leading-[26px] text-[#333] bg-[#f0f0f0]">
        Terrain downloads for DEF CON badge.zip
      </div>

      {/* File menu */}
      <div className="absolute left-[3px] top-[124px] w-[540px] bg-[#fafafa] rounded-b-[12px] rounded-t-[10px] shadow-[0_1px_6px_rgba(0,0,0,0.55)] text-[29px] tracking-[-0.15px] overflow-hidden">
        <MenuRows items={FILE_MENU} pad="pl-[61px]" />
      </div>
      {/* Import submenu */}
      <div className="absolute left-[540px] top-[391px] w-[597px] bg-[#fafafa] rounded-[14px] shadow-[0_1px_6px_rgba(0,0,0,0.55)] text-[29px] tracking-[-0.15px] overflow-hidden">
        <MenuRows items={IMPORT_MENU} pad="pl-[62px]" />
      </div>
    </div>
  );
}
